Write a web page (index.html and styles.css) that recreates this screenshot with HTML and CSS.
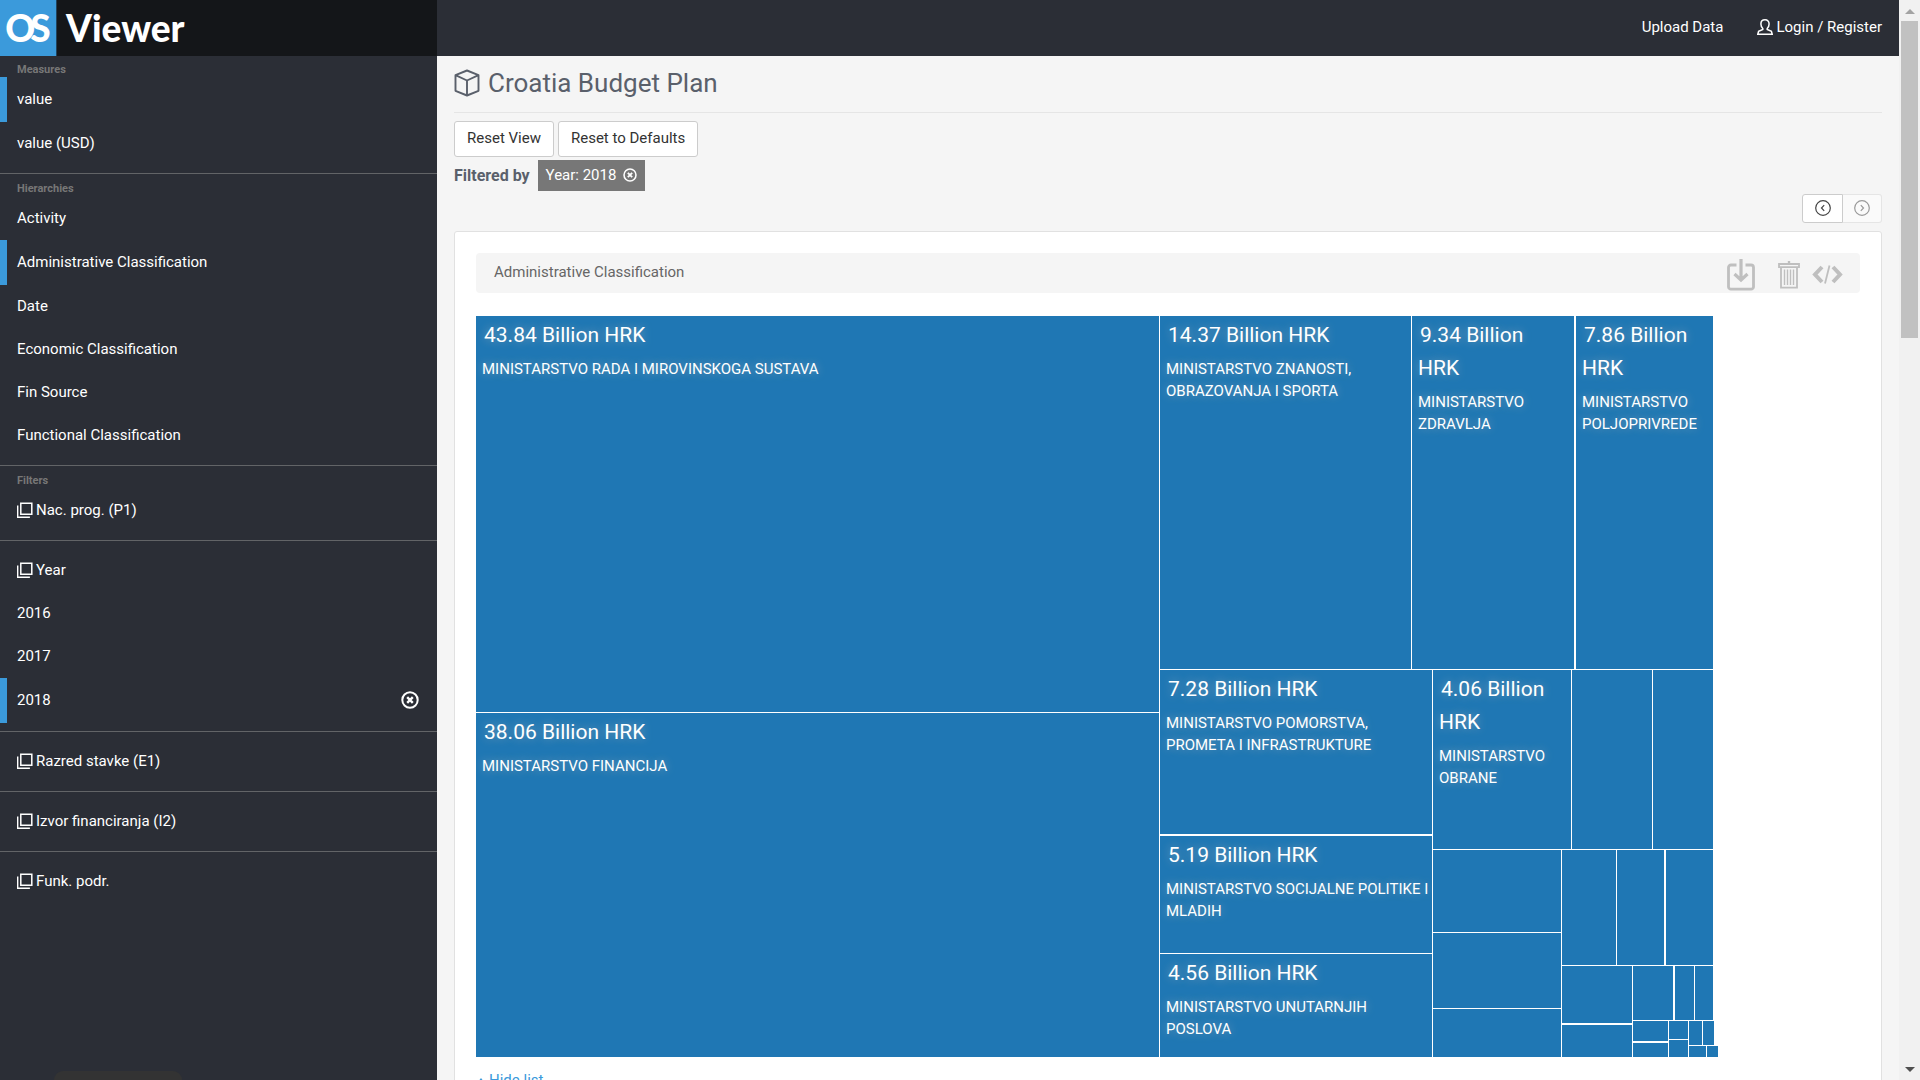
FILE: index.html
```html
<!DOCTYPE html>
<html lang="en">
<head>
<meta charset="utf-8">
<title>OS Viewer – Croatia Budget Plan</title>
<link rel="stylesheet" href="styles.css">
</head>
<body>
<svg class="sprite" aria-hidden="true">
  <symbol id="i-stack" viewBox="0 0 16 16"><path d="M3.800 1.200h11v11h-11z" fill="none" stroke="currentColor" stroke-width="1.500"/><path d="M.7 3.500v11.800h12.200" fill="none" stroke="currentColor" stroke-width="1.400"/></symbol>
  <symbol id="i-remove" viewBox="0 0 18 18"><circle cx="9" cy="9" r="7.700" fill="none" stroke="currentColor" stroke-width="2"/><path d="M6.200 6.200l5.600 5.600M11.800 6.200l-5.600 5.600" stroke="currentColor" stroke-width="2.400"/></symbol>
  <symbol id="i-user" viewBox="0 0 16 16"><path d="M8 .8c-2.600 0-4.100 1.800-4.100 4.200 0 2.100.9 3.600 1.900 4.500v1L1.600 12.200.8 15.200h14.400l-.8-3L10.200 10.500v-1c1-.9 1.900-2.400 1.900-4.500C12.100 2.600 10.600.8 8 .8z" fill="none" stroke="currentColor" stroke-width="1.500"/></symbol>
  <symbol id="i-box" viewBox="0 0 26 28"><path d="M13 1.500l11.500 4.700v15.600L13 26.500 1.500 21.800V6.200zM1.500 6.200L13 11.500l11.500-5.300M13 11.500v15" fill="none" stroke="currentColor" stroke-width="1.900" stroke-linejoin="round"/></symbol>
  <symbol id="i-prev" viewBox="0 0 16 16"><circle cx="8" cy="8" r="7.300" fill="none" stroke="currentColor" stroke-width="1.200"/><path d="M9.200 5.200L6.500 8l2.700 2.800" fill="none" stroke="currentColor" stroke-width="1.200"/></symbol>
  <symbol id="i-next" viewBox="0 0 16 16"><circle cx="8" cy="8" r="7.300" fill="none" stroke="currentColor" stroke-width="1.200"/><path d="M6.800 5.200L9.500 8l-2.700 2.800" fill="none" stroke="currentColor" stroke-width="1.200"/></symbol>
  <symbol id="i-download" viewBox="0 0 28 32"><path d="M9.500 6H4a2.500 2.500 0 0 0-2.500 2.500v19A2.500 2.500 0 0 0 4 30.200h20a2.500 2.500 0 0 0 2.500-2.700v-19A2.500 2.500 0 0 0 24 6h-5.500" fill="none" stroke="currentColor" stroke-width="2.800"/><path d="M14 0v20M7.500 15l6.500 6 6.500-6" fill="none" stroke="currentColor" stroke-width="3.200"/></symbol>
  <symbol id="i-trash" viewBox="0 0 22 28"><path d="M1 3h20v3.200H1zM3 6.500v20.200h16V6.500" fill="none" stroke="currentColor" stroke-width="1.800"/><path d="M11 0v3" stroke="currentColor" stroke-width="2.400"/><path d="M6.500 8.500v15.500M9.500 8.500v15.500M12.500 8.500v15.500M15.500 8.500v15.500" stroke="currentColor" stroke-width="1.400"/></symbol>
  <symbol id="i-code" viewBox="0 0 31 20"><path d="M10 2L3 9.500l7 7.500M21 2l7 7.500-7 7.500" fill="none" stroke="currentColor" stroke-width="4"/><path d="M17.500 0.500l-4.500 18" stroke="currentColor" stroke-width="1.800"/></symbol>
</svg>

<div class="app">
  <aside class="sidebar">
    <a class="brand" href="#"><span class="brand-mark"><span>O</span><span class="brand-s">S</span></span><span class="brand-name">Viewer</span></a>

    <nav class="groups">
      <section class="group">
        <h2 class="group-title">Measures</h2>
        <a class="item active" href="#">value</a>
        <a class="item" href="#">value (USD)</a>
      </section>
      <section class="group">
        <h2 class="group-title">Hierarchies</h2>
        <a class="item" href="#">Activity</a>
        <a class="item active" href="#">Administrative Classification</a>
        <a class="item" href="#">Date</a>
        <a class="item" href="#">Economic Classification</a>
        <a class="item" href="#">Fin Source</a>
        <a class="item" href="#">Functional Classification</a>
      </section>
      <section class="group">
        <h2 class="group-title">Filters</h2>
        <a class="item" href="#"><svg class="icon-16"><use href="#i-stack"/></svg>Nac. prog. (P1)</a>
      </section>
      <section class="group untitled">
        <a class="item" href="#"><svg class="icon-16"><use href="#i-stack"/></svg>Year</a>
        <a class="item" href="#">2016</a>
        <a class="item" href="#">2017</a>
        <a class="item active" href="#">2018<svg class="icon-18 item-remove"><use href="#i-remove"/></svg></a>
      </section>
      <section class="group untitled">
        <a class="item" href="#"><svg class="icon-16"><use href="#i-stack"/></svg>Razred stavke (E1)</a>
      </section>
      <section class="group untitled">
        <a class="item" href="#"><svg class="icon-16"><use href="#i-stack"/></svg>Izvor financiranja (I2)</a>
      </section>
      <section class="group untitled">
        <a class="item" href="#"><svg class="icon-16"><use href="#i-stack"/></svg>Funk. podr.</a>
      </section>
    </nav>
    <div class="status-tab"></div>
  </aside>

  <div class="page">
    <header class="topbar">
      <a href="#">Upload Data</a>
      <a href="#"><svg class="icon-16"><use href="#i-user"/></svg>Login / Register</a>
    </header>

    <main class="content">
      <h1 class="title"><svg class="title-icon"><use href="#i-box"/></svg>Croatia Budget Plan</h1>

      <div class="actions">
        <button class="btn" type="button">Reset View</button>
        <button class="btn" type="button">Reset to Defaults</button>
      </div>

      <div class="filters">
        <strong>Filtered by</strong>
        <button class="tag" type="button">Year: 2018<svg class="icon-14"><use href="#i-remove"/></svg></button>
      </div>

      <div class="pager">
        <button class="pager-btn" type="button" aria-label="Back"><svg class="icon-16"><use href="#i-prev"/></svg></button>
        <button class="pager-btn" type="button" aria-label="Forward" disabled><svg class="icon-16"><use href="#i-next"/></svg></button>
      </div>

      <section class="card">
        <div class="card-head">
          <span class="crumb">Administrative Classification</span>
          <button class="tool tool-download" type="button" aria-label="Download"><svg class="icon-download"><use href="#i-download"/></svg></button>
          <button class="tool tool-trash" type="button" aria-label="Remove"><svg class="icon-trash"><use href="#i-trash"/></svg></button>
          <button class="tool" type="button" aria-label="Embed"><svg class="icon-code"><use href="#i-code"/></svg></button>
        </div>

        <div class="treemap row">
          <div class="col" style="--size:683">
            <div class="cell" style="--size:396"><p class="amount">43.84 Billion HRK</p><p class="name">MINISTARSTVO RADA I MIROVINSKOGA SUSTAVA</p></div>
            <div class="cell" style="--size:344"><p class="amount">38.06 Billion HRK</p><p class="name">MINISTARSTVO FINANCIJA</p></div>
          </div>
          <div class="col" style="--size:553">
            <div class="row" style="--size:353">
              <div class="cell" style="--size:251"><p class="amount">14.37 Billion HRK</p><p class="name">MINISTARSTVO ZNANOSTI, OBRAZOVANJA I SPORTA</p></div>
              <div class="cell" style="--size:162"><p class="amount">9.34 Billion HRK</p><p class="name">MINISTARSTVO ZDRAVLJA</p></div>
              <div class="cell wide" style="--size:137"><p class="amount">7.86 Billion HRK</p><p class="name">MINISTARSTVO POLJOPRIVREDE</p></div>
            </div>
            <div class="row" style="--size:387">
              <div class="col" style="--size:272">
                <div class="cell" style="--size:164"><p class="amount">7.28 Billion HRK</p><p class="name">MINISTARSTVO POMORSTVA, PROMETA I INFRASTRUKTURE</p></div>
                <div class="cell tall" style="--size:117"><p class="amount">5.19 Billion HRK</p><p class="name">MINISTARSTVO SOCIJALNE POLITIKE I MLADIH</p></div>
                <div class="cell" style="--size:103"><p class="amount">4.56 Billion HRK</p><p class="name">MINISTARSTVO UNUTARNJIH POSLOVA</p></div>
              </div>
              <div class="col" style="--size:280">
                <div class="row" style="--size:179">
                  <div class="cell" style="--size:138"><p class="amount">4.06 Billion HRK</p><p class="name">MINISTARSTVO OBRANE</p></div>
                  <div class="cell" style="--size:80"></div>
                  <div class="cell" style="--size:60"></div>
                </div>
                <div class="row" style="--size:207">
                  <div class="col" style="--size:128">
                    <div class="cell" style="--size:82"></div>
                    <div class="cell" style="--size:75"></div>
                    <div class="cell" style="--size:48"></div>
                  </div>
                  <div class="col" style="--size:151">
                    <div class="row" style="--size:115">
                      <div class="cell" style="--size:54"></div>
                      <div class="cell" style="--size:47"></div>
                      <div class="cell wide" style="--size:47"></div>
                    </div>
                    <div class="row" style="--size:91">
                      <div class="col" style="--size:70">
                        <div class="cell" style="--size:57"></div>
                        <div class="cell tall" style="--size:32"></div>
                      </div>
                      <div class="col" style="--size:80">
                        <div class="row" style="--size:54">
                          <div class="cell" style="--size:40"></div>
                          <div class="cell wide" style="--size:19"></div>
                          <div class="cell" style="--size:18"></div>
                        </div>
                        <div class="row" style="--size:36">
                          <div class="col" style="--size:35">
                            <div class="cell" style="--size:20"></div>
                            <div class="cell tall" style="--size:14"></div>
                          </div>
                          <div class="col" style="--size:19">
                            <div class="cell" style="--size:18"></div>
                            <div class="cell" style="--size:17"></div>
                          </div>
                          <div class="col" style="--size:24">
                            <div class="row spill-1" style="--size:24">
                              <div class="cell" style="--size:13"></div>
                              <div class="cell" style="--size:11"></div>
                            </div>
                            <div class="row spill-5" style="--size:11">
                              <div class="cell" style="--size:17"></div>
                              <div class="cell" style="--size:11"></div>
                            </div>
                          </div>
                        </div>
                      </div>
                    </div>
                  </div>
                </div>
              </div>
            </div>
          </div>
        </div>

        <a class="list-toggle" href="#"><span class="caret-up"></span>Hide list</a>
      </section>
    </main>
  </div>

  <div class="scrollbar" aria-hidden="true">
    <span class="arrow arrow-up"></span>
    <span class="thumb"></span>
    <span class="arrow arrow-down"></span>
  </div>
</div>
</body>
</html>
```
FILE: styles.css
```css
* { box-sizing: border-box; }

body {
  margin: 0;
  font: 400 15px/22px Roboto, "Noto Sans", sans-serif;
  color: #5a606b;
  background: #f5f5f5;
}

h1, h2, p { margin: 0; }
a { color: inherit; text-decoration: none; }
button { font: inherit; color: inherit; cursor: pointer; }
svg { display: block; flex: none; }

.sprite { display: none; }
.icon-14 { width: 14px; height: 14px; }
.icon-16 { width: 16px; height: 16px; }
.icon-18 { width: 18px; height: 18px; }

.app {
  display: grid;
  grid-template-columns: 437px minmax(0, 1fr) 21px;
  height: 100vh;
  overflow: hidden;
}

/* Sidebar */
.sidebar {
  display: flex;
  flex-direction: column;
  min-height: 0;
  background: #2b2e36;
  color: #fff;
}

.brand {
  display: flex;
  align-items: center;
  height: 56px;
  flex: none;
  background: #141619;
  font-family: Lato, sans-serif;
  font-weight: 900;
}

.brand-mark {
  display: flex;
  align-items: center;
  justify-content: center;
  width: 57px;
  height: 56px;
  background: #3b9adb;
  border-right: 1px solid #21435d;
  font-size: 37px;
}

.brand-s { margin-left: -5px; }

.brand-name {
  padding-left: 9px;
  font-size: 37px;
}

.groups { flex: 1; }

.group {
  padding-bottom: 8px;
  border-bottom: 1px solid #626467;
}

.group:last-child { border-bottom: 0; }
.untitled { padding-top: 8px; }

.group-title {
  height: 23px;
  padding: 4px 17px 0;
  font-size: 11px;
  line-height: 22px;
  font-weight: 700;
  color: #777;
}

.group:first-child .group-title {
  height: 21px;
  padding-top: 3px;
}

.item {
  display: flex;
  align-items: center;
  gap: 3px;
  height: 43px;
  padding: 0 17px 2px;
}

.item.active {
  height: 45px;
  padding-left: 10px;
  border-left: 7px solid #3b9adb;
}

.item-remove {
  margin-left: auto;
  margin-right: 1px;
}

.status-tab {
  width: 128px;
  height: 9px;
  margin-left: 54px;
  border-radius: 9px 9px 0 0;
  background: #333;
}

/* Page */
.page { min-width: 0; min-height: 0; overflow: hidden; }

.topbar {
  display: flex;
  justify-content: flex-end;
  gap: 34px;
  height: 56px;
  padding: 16px 17px 0;
  background: #2b2e36;
  color: #fff;
}

.topbar a {
  display: flex;
  align-items: center;
  gap: 3px;
  height: 22px;
}

.content { padding: 0 17px; }

.title {
  display: flex;
  align-items: center;
  gap: 8px;
  height: 57px;
  padding-bottom: 3px;
  border-bottom: 1px solid #e5e5e5;
  font-size: 26px;
  font-weight: 400;
}

.title-icon { width: 26px; height: 28px; }

.actions {
  display: flex;
  gap: 4px;
  padding-top: 8px;
}

.btn {
  height: 36px;
  padding: 0 12px 2px;
  border: 1px solid #ccc;
  border-radius: 3px;
  background: #fff;
  color: #333;
}

.filters {
  display: flex;
  align-items: center;
  gap: 8px;
  padding-top: 3px;
}

.filters strong { font-size: 16px; }

.tag {
  display: flex;
  align-items: center;
  gap: 7px;
  height: 31px;
  padding: 0 8px 2px;
  border: 0;
  background: #777;
  color: #fff;
}

.pager {
  display: flex;
  justify-content: flex-end;
  padding: 3px 0 8px;
}

.pager-btn {
  display: flex;
  align-items: center;
  justify-content: center;
  width: 41px;
  height: 29px;
  padding: 0 0 1px;
  border: 1px solid #ccc;
  border-radius: 3px 0 0 3px;
  background: #fff;
  color: #444;
}

.pager-btn:disabled {
  width: 39px;
  border-color: #e5e5e5;
  border-left: 0;
  border-radius: 0 3px 3px 0;
  background: #fafafa;
  color: #999;
}

.card {
  padding: 21px;
  border: 1px solid #e1e1e1;
  border-radius: 3px;
  background: #fff;
}

.card-head {
  display: flex;
  align-items: center;
  height: 40px;
  padding: 0 17px 0 18px;
  border-radius: 4px;
  background: #f5f5f5;
}

.crumb {
  margin-right: auto;
  padding-bottom: 2px;
  color: #666;
}

.tool {
  padding: 4px 0 0;
  border: 0;
  background: none;
  color: #bfbfbf;
}

.tool-download { margin-right: 23px; }
.tool-trash { margin-right: 12px; }
.icon-download { width: 28px; height: 32px; }
.icon-trash { width: 22px; height: 28px; }
.icon-code { width: 31px; height: 20px; }

/* Treemap: nested slices, each sized by its share */
.row, .col {
  display: flex;
  flex: var(--size) 1 0;
  gap: 1px;
  min-width: 0;
  min-height: 0;
}

.col { flex-direction: column; }

.treemap {
  flex: none;
  width: calc(100% - 147px);
  height: 741px;
  margin-top: 23px;
}

.cell {
  flex: var(--size) 1 0;
  min-width: 0;
  min-height: 0;
  overflow: hidden;
  background: #1f77b4;
  color: #fff;
  text-shadow: 0 0 10px rgba(255, 220, 190, .4);
}

.cell.wide { margin-left: 1px; }
.cell.tall { margin-top: 1px; }
.spill-1 { margin-right: -1px; }
.spill-5 { margin-right: -5px; }

.amount {
  padding: 3px 6px 0;
  font-size: 21px;
  line-height: 33px;
  text-indent: 2px;
}

.name {
  padding: 6px 0 0 6px;
}

.list-toggle {
  display: flex;
  align-items: center;
  gap: 5px;
  margin-top: 12px;
  padding-left: 2px;
  color: #3b9adb;
}

.caret-up {
  border: 3px solid transparent;
  border-top: 0;
  border-bottom: 4px solid #3b9adb;
}

/* Scroll track */
.scrollbar {
  display: flex;
  flex-direction: column;
  align-items: center;
  background: #f1f1f1;
}

.arrow { border: 5px solid transparent; }

.arrow-up {
  margin: 9px 0 7px;
  border-top: 0;
  border-bottom-color: #a3a3a3;
}

.thumb {
  width: 17px;
  height: 317px;
  background: #c1c1c1;
}

.arrow-down {
  margin: auto 0 8px;
  border-bottom: 0;
  border-top-color: #505050;
}
```
